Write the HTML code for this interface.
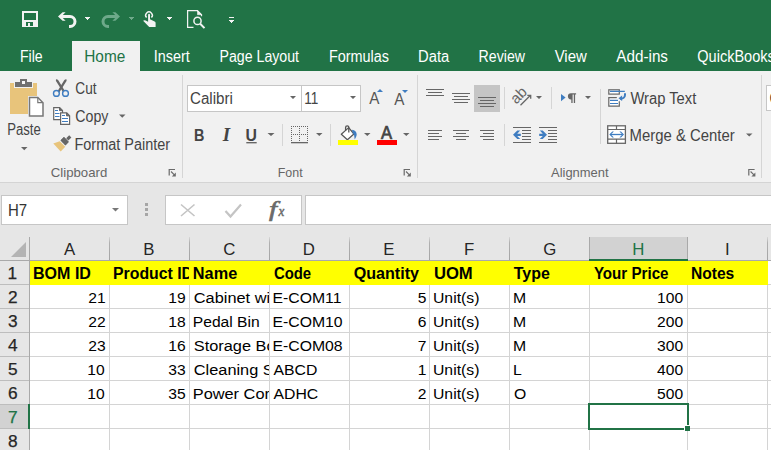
<!DOCTYPE html>
<html><head><meta charset="utf-8"><style>
html,body{margin:0;padding:0;width:771px;height:450px;overflow:hidden;background:#fff}
svg{display:block}
svg{font-family:"Liberation Sans",sans-serif}
text{white-space:pre}
</style></head><body>
<svg width="771" height="450" viewBox="0 0 771 450" shape-rendering="crispEdges">
<defs><clipPath id="c767_771"><rect x="767" y="0" width="4" height="450"/></clipPath><clipPath id="c190_269"><rect x="190" y="0" width="79" height="450"/></clipPath><clipPath id="c110_189"><rect x="110" y="0" width="79" height="450"/></clipPath></defs>
<!-- title + tabs -->
<rect x="0" y="0" width="771" height="71" fill="#217346"/>
<rect x="72" y="41" width="68" height="31" fill="#f1f1f1"/>
<!-- ribbon -->
<rect x="0" y="71" width="771" height="111" fill="#f1f1f1"/>
<rect x="0" y="182" width="771" height="1" fill="#d4d4d4"/>
<rect x="0" y="183" width="771" height="78" fill="#e6e6e6"/>
<!-- QAT icons -->
<g fill="#f3f3f3">
  <path d="M22,11h16v16h-16z M24,12.5v7h12v-7z M26,22v4h2v-3h2v3h3v-4z" fill-rule="evenodd"/>
  <path d="M84,17h6l-3,3z"/>
  <path d="M166.8,17h6.2l-3.1,3.1z"/>
  <path d="M229,17h5v1h-5z M229,20h5.3l-2.65,3.1z"/>
</g>
<g shape-rendering="geometricPrecision">
  <path d="M61,16.5h9a5,5 0 0 1 0,10h-1" fill="none" stroke="#f3f3f3" stroke-width="3"/>
  <path d="M58,16.5l4.6,-4.3h3l-4.3,4.3l4.3,4.3h-3z" fill="#f3f3f3"/>
  <path d="M117,16.5h-9a5,5 0 0 0 0,10h1" fill="none" stroke="#6ea98a" stroke-width="3"/>
  <path d="M120,16.5l-4.6,-4.3h-3l4.3,4.3l-4.3,4.3h3z" fill="#6ea98a"/>
</g>
<path d="M128,17h6l-3,3z" fill="#6ea98a"/>
<!-- touch icon -->
<g shape-rendering="geometricPrecision">
  <path d="M146.6,17.6a3.3,3.3 0 1 1 4.8,0" fill="none" stroke="#f3f3f3" stroke-width="1.4"/>
  <path d="M148.1,14.8a0.95,0.95 0 0 1 1.9,0v4.4l4.6,2.3c0.6,0.3 1,0.8 1,1.4v4.1h-6.4l-6.1,-6.3c0.7,-0.6 1.6,-0.7 2.4,-0.3l2.6,1.4z" fill="#f3f3f3"/>
</g>
<!-- print preview -->
<g fill="none" stroke="#f3f3f3" stroke-width="1.25" shape-rendering="geometricPrecision">
  <path d="M193.5,27.3h-5.9v-16.6h9.9l4,4v1.6"/>
  <path d="M197.5,10.7v4h4z" fill="#f3f3f3" stroke-width="0.6"/>
  <circle cx="197.5" cy="20.9" r="3.6" stroke-width="1.5"/>
  <path d="M200.2,23.8l4.3,4.3" stroke-width="2"/>
</g>
<!-- Paste -->
<rect x="10" y="83" width="27" height="31" rx="1" fill="#e8c47b"/>
<path d="M14,81h19v7h-19z" fill="#f1f1f1"/>
<path d="M15,82h17v5h-17z" fill="#707070"/>
<path d="M20,79h7v4h-7z M22,81v3h3v-3z" fill="#707070" fill-rule="evenodd"/>
<rect x="21.5" y="80.8" width="3.5" height="3.4" fill="#f7f7f7"/>
<path d="M28,96h11l6,6v16h-17z" fill="#f1f1f1"/>
<path d="M29.5,97.5h8.3l5.2,5.2v13.3h-13.5z" fill="#fff" stroke="#777" stroke-width="1.5" shape-rendering="geometricPrecision"/>
<path d="M37.8,97.5v5.2h5.2" fill="none" stroke="#777" stroke-width="1.2" shape-rendering="geometricPrecision"/>
<path d="M21,147h6.5l-3.25,3.2z" fill="#666" shape-rendering="geometricPrecision"/>
<!-- scissors -->
<g shape-rendering="geometricPrecision">
  <path d="M56.2,79.2c0.9,0 1.6,0.4 2.1,1.1l6.9,11.2l-2,1.1l-7.2,-11.6c-0.3,-0.6 -0.2,-1.3 0.2,-1.8z" fill="#666"/>
  <path d="M66.3,79.2c-0.9,0 -1.6,0.4 -2.1,1.1l-6.9,11.2l2,1.1l7.2,-11.6c0.3,-0.6 0.2,-1.3 -0.2,-1.8z" fill="#666"/>
  <circle cx="56.4" cy="93.4" r="2.9" fill="#f1f1f1" stroke="#3f7dc1" stroke-width="1.4"/>
  <circle cx="65.5" cy="93.4" r="2.9" fill="#f1f1f1" stroke="#3f7dc1" stroke-width="1.4"/>
</g>
<!-- copy -->
<g shape-rendering="geometricPrecision">
  <path d="M53.7,107.6h6l2.8,2.8v9.2h-8.8z" fill="#fff" stroke="#666" stroke-width="1.2"/>
  <path d="M60.6,112.9h6.2l2.8,2.8v8.7h-9z" fill="#fff" stroke="#666" stroke-width="1.2"/>
  <path d="M66.5,112.9v3h3 M59.5,107.6v3h3" fill="#666" stroke="#666" stroke-width="1"/>
  <path d="M55,110.5h3M55,113.5h4.5M55,116.5h4.5M62,115.5h3M62,118.5h6M62,121.5h6" stroke="#3f7dc1" stroke-width="1.1"/>
</g>
<path d="M119,114.5h6.5l-3.25,3.2z" fill="#666" shape-rendering="geometricPrecision"/>
<!-- format painter -->
<g shape-rendering="geometricPrecision">
  <path d="M53.3,143.6l6.4,-2.4l5.6,5.6l-4.6,4.6z" fill="#e8c47b"/>
  <path d="M60.7,140.3l3.3,-3.3l4.6,4.6l-3.3,3.3z" fill="#666" transform="translate(0,0)"/>
  <path d="M60.5,140.5l3.4,-3.4l3.2,3.2l-3.4,3.4z" fill="#666"/>
  <path d="M63.9,143.9l3.4,-3.4l1.6,1.6l-3.4,3.4z" fill="#666"/>
  <path d="M66.2,138.2l3,-3l2.2,2.2l-3,3z" fill="#666"/>
</g>
<!-- dialog launchers -->
<g shape-rendering="geometricPrecision">
<path d="M169.2,175.5v-6h5.8" fill="none" stroke="#6a6a6a" stroke-width="1.2"/>
<path d="M171.0,171.5l3.6,3.6" fill="none" stroke="#6a6a6a" stroke-width="1.1"/>
<path d="M175.8,172.4v4h-4z" fill="#6a6a6a"/>
<path d="M404.2,175.5v-6h5.8" fill="none" stroke="#6a6a6a" stroke-width="1.2"/>
<path d="M406.0,171.5l3.6,3.6" fill="none" stroke="#6a6a6a" stroke-width="1.1"/>
<path d="M410.8,172.4v4h-4z" fill="#6a6a6a"/>
<path d="M748.8,175.5v-6h5.8" fill="none" stroke="#6a6a6a" stroke-width="1.2"/>
<path d="M750.6,171.5l3.6,3.6" fill="none" stroke="#6a6a6a" stroke-width="1.1"/>
<path d="M755.4,172.4v4h-4z" fill="#6a6a6a"/>
</g>
<!-- group separators -->
<rect x="182" y="75" width="1" height="103" fill="#d5d5d5"/>
<rect x="417" y="75" width="1" height="103" fill="#d5d5d5"/>
<rect x="761" y="75" width="1" height="103" fill="#d5d5d5"/>
<!-- font boxes -->
<rect x="187.5" y="85.5" width="173" height="26" fill="#fff" stroke="#c6c6c6"/>
<rect x="301" y="85" width="1" height="27" fill="#c6c6c6"/>
<path d="M290,96h6l-3,3z M350,96h6l-3,3z" fill="#666" shape-rendering="geometricPrecision"/>
<rect x="766.5" y="85.5" width="10" height="25" fill="#fff" stroke="#c6c6c6"/>
<!-- grow/shrink -->
<g shape-rendering="geometricPrecision">
  <path d="M377,92h6l-3,-3z" fill="#3f7dc1"/>
  <path d="M402,90h6l-3,3z" fill="#3f7dc1"/>
</g>
<!-- B I U -->
<g shape-rendering="geometricPrecision">
  <rect x="246.3" y="142.2" width="10.4" height="1.1" fill="#444"/>
  <path d="M267.5,133h7l-3.5,3z M316,133h6.5l-3.25,3z M364,133h6.5l-3.25,3z M403,133h6.5l-3.25,3z" fill="#666"/>
</g>
<rect x="282" y="124" width="1" height="22" fill="#d5d5d5"/>
<rect x="330" y="124" width="1" height="22" fill="#d5d5d5"/>
<!-- borders icon -->
<path d="M291,126h1v1h-1z M291,134h1v1h-1z M293,126h1v1h-1z M293,134h1v1h-1z M295,126h1v1h-1z M295,134h1v1h-1z M297,126h1v1h-1z M297,134h1v1h-1z M299,126h1v1h-1z M299,134h1v1h-1z M301,126h1v1h-1z M301,134h1v1h-1z M303,126h1v1h-1z M303,134h1v1h-1z M305,126h1v1h-1z M305,134h1v1h-1z M307,126h1v1h-1z M307,134h1v1h-1z M291,128h1v1h-1z M291,130h1v1h-1z M291,132h1v1h-1z M291,136h1v1h-1z M291,138h1v1h-1z M291,140h1v1h-1z M299,128h1v1h-1z M299,130h1v1h-1z M299,132h1v1h-1z M299,136h1v1h-1z M299,138h1v1h-1z M299,140h1v1h-1z M307,128h1v1h-1z M307,130h1v1h-1z M307,132h1v1h-1z M307,136h1v1h-1z M307,138h1v1h-1z M307,140h1v1h-1z" fill="#666"/>
<rect x="291" y="142" width="17" height="1.3" fill="#666" shape-rendering="geometricPrecision"/>
<!-- fill color -->
<g shape-rendering="geometricPrecision">
  <path d="M341.3,134.2l7.4,-6.6l5.2,6.4l-6.5,5.8z" fill="#fff" stroke="#555" stroke-width="1.2" stroke-linejoin="round"/>
  <path d="M345.6,130.8v-3.4a1.6,1.6 0 0 1 3.2,0v5" fill="none" stroke="#555" stroke-width="1.3"/>
  <path d="M352,129.8c2.8,0.4 4.8,2.2 4.7,4.8c-0.1,1.7 -1,3.4 -2,4.9l-0.6,-4.6l-1.5,-2.2z" fill="#3f7dc1"/>
  <rect x="338" y="140" width="20" height="5" fill="#ffff00"/>
  <rect x="377" y="140" width="20" height="5" fill="#ff0000"/>
</g>
<!-- alignment icons -->
<rect x="474" y="85" width="26" height="27" fill="#c5c5c5"/>
<g fill="#666">
  <path d="M426,89h18v1.2h-18z M428,92h14v1.2h-14z M426,95h18v1.2h-18z"/>
  <path d="M452,93h18v1.2h-18z M454,96h14v1.2h-14z M452,99h18v1.2h-18z M454,102h14v1.2h-14z"/>
  <path d="M478,97h18v1.2h-18z M480,100h14v1.2h-14z M478,103h18v1.2h-18z M480,106h14v1.2h-14z"/>
  <path d="M428,130h14v1.2h-14z M428,133h11v1.2h-11z M428,136h14v1.2h-14z M428,139h11v1.2h-11z"/>
  <path d="M453,130h16v1.2h-16z M456,133h10v1.2h-10z M453,136h16v1.2h-16z M456,139h10v1.2h-10z"/>
  <path d="M480,130h14v1.2h-14z M483,133h11v1.2h-11z M480,136h14v1.2h-14z M483,139h11v1.2h-11z"/>
  <path d="M513,127h18v1.2h-18z M522,130h9v1.2h-9z M522,133h9v1.2h-9z M522,136h9v1.2h-9z M522,139h9v1.2h-9z M513,142h18v1.2h-18z"/>
  <path d="M539,127h18v1.2h-18z M548,130h9v1.2h-9z M548,133h9v1.2h-9z M548,136h9v1.2h-9z M548,139h9v1.2h-9z M539,142h18v1.2h-18z"/>
  <path d="M536,96h6l-3,3z M585,96h6l-3,3z M746,133.5h6.5l-3.25,3z" shape-rendering="geometricPrecision"/>
</g>
<g shape-rendering="geometricPrecision">
  <path d="M513,134.8l4.3,-4.2h2.9l-3,3.1h3.6v2.3h-3.6l3,3.1h-2.9z" fill="#3f7dc1"/>
  <path d="M547,134.8l-4.3,-4.2h-2.9l3,3.1h-3.6v2.3h3.6l-3,3.1h2.9z" fill="#3f7dc1"/>
  <path d="M561,94v7.2l4.6,-3.6z" fill="#3f7dc1"/>
  <path d="M571.5,93.2h4.6v1.2h-1v8.6h-1.3v-8.6h-1.2v8.6h-1.3v-3.6h-0.3a3.1,3.1 0 0 1 0,-6.2z" fill="#666"/>
  <text x="0" y="0" font-size="15" fill="#666" text-anchor="middle" transform="translate(518.6,95.4) rotate(-45) translate(0,4.9)">ab</text>
  <path d="M520.5,105.3l10,-10 M527.3,95.3h3.4v3.4" fill="none" stroke="#666" stroke-width="1.3"/>
</g>
<rect x="504" y="87" width="1" height="22" fill="#d5d5d5"/>
<rect x="504" y="124" width="1" height="22" fill="#d5d5d5"/>
<rect x="551" y="87" width="1" height="22" fill="#d5d5d5"/>
<rect x="600" y="89" width="1" height="55" fill="#d5d5d5"/>
<!-- wrap text icon -->
<g shape-rendering="geometricPrecision">
  <rect x="608.8" y="89.8" width="10.5" height="4.3" fill="#fff" stroke="#666" stroke-width="1.2"/>
  <path d="M616.8,97.7h-8v8.5h10.5v-5" fill="#fff" stroke="#666" stroke-width="1.2"/>
  <path d="M610,91.4h14.8 M610,100.4h8 M610,103.5h8" stroke="#3f7dc1" stroke-width="1.2"/>
  <path d="M625,93.2v1.5a4,4 0 0 1 -4,4h-1" fill="none" stroke="#3f7dc1" stroke-width="2"/>
  <path d="M618.5,98.3l3.6,-2.9v5.6z" fill="#3f7dc1"/>
</g>
<!-- merge icon -->
<g shape-rendering="geometricPrecision">
  <rect x="607.7" y="125.8" width="17.7" height="17.5" fill="#fff" stroke="#666" stroke-width="1.3"/>
  <path d="M608,129.5h17 M608,139.2h17 M616.5,126v3.5 M616.5,139.2v4" stroke="#666" stroke-width="1.2"/>
  <path d="M611,134.5h11.5" stroke="#3f7dc1" stroke-width="1.3"/>
  <path d="M609.3,134.5l3,-3h1.6l-3,3l3,3h-1.6z M624,134.5l-3,-3h-1.6l3,3l-3,3h1.6z" fill="#3f7dc1"/>
</g>
<!-- formula bar -->
<rect x="1.5" y="195.5" width="126" height="29" fill="#fff" stroke="#c6c6c6"/>
<path d="M112,208h7l-3.5,3.5z" fill="#777" shape-rendering="geometricPrecision"/>
<rect x="145" y="203" width="3" height="3" fill="#a6a6a6"/>
<rect x="145" y="208" width="3" height="3" fill="#a6a6a6"/>
<rect x="145" y="213" width="3" height="3" fill="#a6a6a6"/>
<rect x="165.5" y="195.5" width="136" height="29" fill="#fff" stroke="#c6c6c6"/>
<rect x="305.5" y="195.5" width="480" height="29" fill="#fff" stroke="#c6c6c6"/>
<g shape-rendering="geometricPrecision">
  <path d="M181,204.5l13.5,11.5M194.5,204.5l-13.5,11.5" stroke="#c4c4c4" stroke-width="1.6"/>
  <path d="M225.5,211l5,5.5l10.5,-12" fill="none" stroke="#c4c4c4" stroke-width="2.2"/>
</g>
<!-- sheet -->
<rect x="0" y="237" width="771" height="23" fill="#e6e6e6"/>
<rect x="0" y="260" width="771" height="1" fill="#a9a9a9"/>
<rect x="0" y="261" width="29" height="189" fill="#e6e6e6"/>
<rect x="29" y="237" width="1" height="213" fill="#a9a9a9"/>
<path d="M11,257l15,-15v15z" fill="#b4b4b4" shape-rendering="geometricPrecision"/>
<rect x="30" y="261" width="741" height="189" fill="#fff"/>
<g fill="#bdbdbd">
  <rect x="0" y="284" width="29" height="1"/><rect x="0" y="308" width="29" height="1"/><rect x="0" y="332" width="29" height="1"/>
  <rect x="0" y="356" width="29" height="1"/><rect x="0" y="380" width="29" height="1"/><rect x="0" y="404" width="29" height="1"/><rect x="0" y="428" width="29" height="1"/>
</g>
<linearGradient id="hg" x1="0" y1="0" x2="0" y2="1"><stop offset="0" stop-color="#d8d8d8"/><stop offset="0.25" stop-color="#b0b0b0"/><stop offset="1" stop-color="#a4a4a4"/></linearGradient>
<g fill="url(#hg)">
  <rect x="109" y="237" width="1" height="23"/><rect x="189" y="237" width="1" height="23"/><rect x="269" y="237" width="1" height="23"/>
  <rect x="349" y="237" width="1" height="23"/><rect x="429" y="237" width="1" height="23"/><rect x="509" y="237" width="1" height="23"/>
  <rect x="767" y="237" width="1" height="23"/>
</g>
<rect x="589" y="237" width="99" height="23" fill="#d2d2d2"/>
<rect x="589" y="237" width="1" height="23" fill="#a9a9a9"/>
<rect x="687" y="237" width="1" height="23" fill="#a9a9a9"/>
<rect x="589" y="259" width="99" height="2" fill="#217346"/>
<rect x="0" y="405" width="28" height="23" fill="#d2d2d2"/>
<rect x="28" y="404" width="2" height="25" fill="#217346"/>
<g fill="#d4d4d4">
  <rect x="30" y="308" width="741" height="1"/><rect x="30" y="332" width="741" height="1"/><rect x="30" y="356" width="741" height="1"/>
  <rect x="30" y="380" width="741" height="1"/><rect x="30" y="404" width="741" height="1"/><rect x="30" y="428" width="741" height="1"/>
  <rect x="768" y="284" width="3" height="1"/>
  <rect x="109" y="285" width="1" height="165"/><rect x="189" y="285" width="1" height="165"/><rect x="269" y="285" width="1" height="165"/>
  <rect x="349" y="285" width="1" height="165"/><rect x="429" y="285" width="1" height="165"/><rect x="509" y="285" width="1" height="165"/>
  <rect x="589" y="285" width="1" height="165"/><rect x="687" y="285" width="1" height="165"/><rect x="767" y="261" width="1" height="189"/>
</g>
<rect x="30" y="261" width="738" height="24" fill="#ffff00"/>
<!-- selection -->
<path d="M588,403h101v27h-101z M590,405v23h97v-23z" fill="#217346" fill-rule="evenodd"/>
<rect x="684" y="425" width="6" height="6" fill="#fff"/>
<rect x="685" y="426" width="5" height="5" fill="#217346"/>

<g shape-rendering="geometricPrecision">
<text x="20.02" y="62.00" font-size="16" fill="#fff" textLength="22.69" lengthAdjust="spacingAndGlyphs">File</text>
<text x="84.24" y="62.00" font-size="16" fill="#217346" textLength="41.06" lengthAdjust="spacingAndGlyphs">Home</text>
<text x="153.80" y="62.00" font-size="16" fill="#fff" textLength="36.00" lengthAdjust="spacingAndGlyphs">Insert</text>
<text x="219.52" y="62.00" font-size="16" fill="#fff" textLength="79.49" lengthAdjust="spacingAndGlyphs">Page Layout</text>
<text x="328.90" y="62.00" font-size="16" fill="#fff" textLength="60.10" lengthAdjust="spacingAndGlyphs">Formulas</text>
<text x="418.08" y="62.00" font-size="16" fill="#fff" textLength="31.23" lengthAdjust="spacingAndGlyphs">Data</text>
<text x="478.62" y="62.00" font-size="16" fill="#fff" textLength="46.39" lengthAdjust="spacingAndGlyphs">Review</text>
<text x="554.70" y="62.00" font-size="16" fill="#fff" textLength="32.08" lengthAdjust="spacingAndGlyphs">View</text>
<text x="616.30" y="62.00" font-size="16" fill="#fff" textLength="51.70" lengthAdjust="spacingAndGlyphs">Add-ins</text>
<text x="697.30" y="62.00" font-size="16" fill="#fff" textLength="77.47" lengthAdjust="spacingAndGlyphs">QuickBooks</text>
<text x="7.18" y="135.00" font-size="16" fill="#444" textLength="33.54" lengthAdjust="spacingAndGlyphs">Paste</text>
<text x="75.30" y="94.00" font-size="16" fill="#444" textLength="21.23" lengthAdjust="spacingAndGlyphs">Cut</text>
<text x="75.30" y="122.00" font-size="16" fill="#444" textLength="33.10" lengthAdjust="spacingAndGlyphs">Copy</text>
<text x="74.50" y="150.00" font-size="16" fill="#444" textLength="95.60" lengthAdjust="spacingAndGlyphs">Format Painter</text>
<text x="50.80" y="177.00" font-size="13" fill="#666" textLength="56.43" lengthAdjust="spacingAndGlyphs">Clipboard</text>
<text x="190.00" y="104.00" font-size="16" fill="#444" textLength="42.93" lengthAdjust="spacingAndGlyphs">Calibri</text>
<text x="304.35" y="104.00" font-size="16" fill="#444" textLength="14.06" lengthAdjust="spacingAndGlyphs">11</text>
<text x="277.74" y="177.00" font-size="13" fill="#666" textLength="24.89" lengthAdjust="spacingAndGlyphs">Font</text>
<text x="630.40" y="104.00" font-size="16" fill="#444" textLength="65.89" lengthAdjust="spacingAndGlyphs">Wrap Text</text>
<text x="629.57" y="141.00" font-size="16" fill="#444" textLength="105.11" lengthAdjust="spacingAndGlyphs">Merge &amp; Center</text>
<text x="769.60" y="104.00" font-size="16" fill="#333" clip-path="url(#c767_771)" textLength="51.66" lengthAdjust="spacingAndGlyphs">General</text>
<text x="551.00" y="177.00" font-size="13" fill="#666" textLength="57.61" lengthAdjust="spacingAndGlyphs">Alignment</text>
<text x="194.07" y="141.00" font-size="17.4" fill="#444" font-weight="bold" textLength="10.39" lengthAdjust="spacingAndGlyphs">B</text>
<text x="222.83" y="141.00" font-size="18.3" fill="#444" font-weight="bold" font-style="italic" font-family="Liberation Serif" textLength="7.35" lengthAdjust="spacingAndGlyphs">I</text>
<text x="245.59" y="141.00" font-size="17.4" fill="#444" font-weight="bold" textLength="11.42" lengthAdjust="spacingAndGlyphs">U</text>
<text x="369.20" y="104.00" font-size="16.3" fill="#555" textLength="10.17" lengthAdjust="spacingAndGlyphs">A</text>
<text x="394.20" y="105.00" font-size="16.3" fill="#555" textLength="10.17" lengthAdjust="spacingAndGlyphs">A</text>
<text x="381.00" y="138.70" font-size="18.3" fill="#444" stroke="#444" stroke-width="0.7" textLength="11.07" lengthAdjust="spacingAndGlyphs">A</text>
<text x="8.06" y="216.00" font-size="16" fill="#333" textLength="19.14" lengthAdjust="spacingAndGlyphs">H7</text>
<text x="269.00" y="215.60" font-size="20" fill="#6a6a6a" font-style="italic" font-family="Liberation Serif" stroke="#6a6a6a" stroke-width="0.6" textLength="7.99" lengthAdjust="spacingAndGlyphs">f</text>
<text x="278.38" y="215.60" font-size="15" fill="#6a6a6a" font-style="italic" font-family="Liberation Serif" stroke="#6a6a6a" stroke-width="0.5" textLength="5.83" lengthAdjust="spacingAndGlyphs">x</text>
<text x="63.90" y="255.00" font-size="16.5" fill="#262626" textLength="11.21" lengthAdjust="spacingAndGlyphs">A</text>
<text x="143.39" y="255.00" font-size="16.5" fill="#262626" textLength="11.21" lengthAdjust="spacingAndGlyphs">B</text>
<text x="223.39" y="255.00" font-size="16.5" fill="#262626" textLength="12.13" lengthAdjust="spacingAndGlyphs">C</text>
<text x="302.88" y="255.00" font-size="16.5" fill="#262626" textLength="12.13" lengthAdjust="spacingAndGlyphs">D</text>
<text x="383.39" y="255.00" font-size="16.5" fill="#262626" textLength="11.21" lengthAdjust="spacingAndGlyphs">E</text>
<text x="463.90" y="255.00" font-size="16.5" fill="#262626" textLength="10.26" lengthAdjust="spacingAndGlyphs">F</text>
<text x="543.39" y="255.00" font-size="16.5" fill="#262626" textLength="13.07" lengthAdjust="spacingAndGlyphs">G</text>
<text x="632.39" y="255.00" font-size="16.5" fill="#217346" textLength="12.13" lengthAdjust="spacingAndGlyphs">H</text>
<text x="724.95" y="255.00" font-size="16.5" fill="#262626" textLength="4.67" lengthAdjust="spacingAndGlyphs">I</text>
<text x="7.51" y="279.00" font-size="17" fill="#262626" stroke="#262626" stroke-width="0.25" textLength="9.63" lengthAdjust="spacingAndGlyphs">1</text>
<text x="8.02" y="303.00" font-size="17" fill="#262626" stroke="#262626" stroke-width="0.25" textLength="9.63" lengthAdjust="spacingAndGlyphs">2</text>
<text x="8.02" y="327.00" font-size="17" fill="#262626" stroke="#262626" stroke-width="0.25" textLength="9.63" lengthAdjust="spacingAndGlyphs">3</text>
<text x="8.02" y="351.00" font-size="17" fill="#262626" stroke="#262626" stroke-width="0.25" textLength="9.63" lengthAdjust="spacingAndGlyphs">4</text>
<text x="8.02" y="375.00" font-size="17" fill="#262626" stroke="#262626" stroke-width="0.25" textLength="9.63" lengthAdjust="spacingAndGlyphs">5</text>
<text x="8.02" y="399.00" font-size="17" fill="#262626" stroke="#262626" stroke-width="0.25" textLength="9.63" lengthAdjust="spacingAndGlyphs">6</text>
<text x="8.02" y="423.00" font-size="17" fill="#217346" stroke="#217346" stroke-width="0.25" textLength="9.63" lengthAdjust="spacingAndGlyphs">7</text>
<text x="8.02" y="447.00" font-size="17" fill="#262626" stroke="#262626" stroke-width="0.25" textLength="9.63" lengthAdjust="spacingAndGlyphs">8</text>
<text x="33.00" y="279.00" font-size="16" fill="#000" font-weight="bold" textLength="57.96" lengthAdjust="spacingAndGlyphs">BOM ID</text>
<text x="113.01" y="279.00" font-size="16" fill="#000" font-weight="bold" clip-path="url(#c110_189)" textLength="80.06" lengthAdjust="spacingAndGlyphs">Product ID</text>
<text x="192.88" y="279.00" font-size="16" fill="#000" font-weight="bold" textLength="44.31" lengthAdjust="spacingAndGlyphs">Name</text>
<text x="273.90" y="279.00" font-size="16" fill="#000" font-weight="bold" textLength="37.21" lengthAdjust="spacingAndGlyphs">Code</text>
<text x="353.70" y="279.00" font-size="16" fill="#000" font-weight="bold" textLength="65.30" lengthAdjust="spacingAndGlyphs">Quantity</text>
<text x="433.90" y="279.00" font-size="16" fill="#000" font-weight="bold" textLength="38.84" lengthAdjust="spacingAndGlyphs">UOM</text>
<text x="513.70" y="279.00" font-size="16" fill="#000" font-weight="bold" textLength="36.10" lengthAdjust="spacingAndGlyphs">Type</text>
<text x="593.90" y="279.00" font-size="16" fill="#000" font-weight="bold" textLength="74.60" lengthAdjust="spacingAndGlyphs">Your Price</text>
<text x="690.92" y="279.00" font-size="16" fill="#000" font-weight="bold" textLength="43.38" lengthAdjust="spacingAndGlyphs">Notes</text>
<text x="88.34" y="303.00" font-size="15.5" fill="#000" textLength="17.39" lengthAdjust="spacingAndGlyphs">21</text>
<text x="168.34" y="303.00" font-size="15.5" fill="#000" textLength="17.39" lengthAdjust="spacingAndGlyphs">19</text>
<text x="193.80" y="303.00" font-size="15.5" fill="#000" clip-path="url(#c190_269)" textLength="129.83" lengthAdjust="spacingAndGlyphs">Cabinet with Door</text>
<text x="272.48" y="303.00" font-size="15.5" fill="#000" textLength="68.98" lengthAdjust="spacingAndGlyphs">E-COM11</text>
<text x="417.83" y="303.00" font-size="15.5" fill="#000" textLength="8.69" lengthAdjust="spacingAndGlyphs">5</text>
<text x="432.98" y="303.00" font-size="15.5" fill="#000" textLength="46.47" lengthAdjust="spacingAndGlyphs">Unit(s)</text>
<text x="512.98" y="303.00" font-size="15.5" fill="#000" textLength="13.15" lengthAdjust="spacingAndGlyphs">M</text>
<text x="657.04" y="303.00" font-size="15.5" fill="#000" textLength="26.08" lengthAdjust="spacingAndGlyphs">100</text>
<text x="88.34" y="327.00" font-size="15.5" fill="#000" textLength="17.39" lengthAdjust="spacingAndGlyphs">22</text>
<text x="168.34" y="327.00" font-size="15.5" fill="#000" textLength="17.39" lengthAdjust="spacingAndGlyphs">18</text>
<text x="192.79" y="327.00" font-size="15.5" fill="#000" clip-path="url(#c190_269)" textLength="66.93" lengthAdjust="spacingAndGlyphs">Pedal Bin</text>
<text x="272.48" y="327.00" font-size="15.5" fill="#000" textLength="70.15" lengthAdjust="spacingAndGlyphs">E-COM10</text>
<text x="417.83" y="327.00" font-size="15.5" fill="#000" textLength="8.69" lengthAdjust="spacingAndGlyphs">6</text>
<text x="432.98" y="327.00" font-size="15.5" fill="#000" textLength="46.47" lengthAdjust="spacingAndGlyphs">Unit(s)</text>
<text x="512.98" y="327.00" font-size="15.5" fill="#000" textLength="13.15" lengthAdjust="spacingAndGlyphs">M</text>
<text x="657.04" y="327.00" font-size="15.5" fill="#000" textLength="26.08" lengthAdjust="spacingAndGlyphs">200</text>
<text x="88.34" y="351.00" font-size="15.5" fill="#000" textLength="17.39" lengthAdjust="spacingAndGlyphs">23</text>
<text x="168.34" y="351.00" font-size="15.5" fill="#000" textLength="17.39" lengthAdjust="spacingAndGlyphs">16</text>
<text x="193.80" y="351.00" font-size="15.5" fill="#000" clip-path="url(#c190_269)" textLength="89.89" lengthAdjust="spacingAndGlyphs">Storage Box</text>
<text x="272.48" y="351.00" font-size="15.5" fill="#000" textLength="70.15" lengthAdjust="spacingAndGlyphs">E-COM08</text>
<text x="417.83" y="351.00" font-size="15.5" fill="#000" textLength="8.69" lengthAdjust="spacingAndGlyphs">7</text>
<text x="432.98" y="351.00" font-size="15.5" fill="#000" textLength="46.47" lengthAdjust="spacingAndGlyphs">Unit(s)</text>
<text x="512.98" y="351.00" font-size="15.5" fill="#000" textLength="13.15" lengthAdjust="spacingAndGlyphs">M</text>
<text x="657.04" y="351.00" font-size="15.5" fill="#000" textLength="26.08" lengthAdjust="spacingAndGlyphs">300</text>
<text x="87.33" y="375.00" font-size="15.5" fill="#000" textLength="17.39" lengthAdjust="spacingAndGlyphs">10</text>
<text x="168.34" y="375.00" font-size="15.5" fill="#000" textLength="17.39" lengthAdjust="spacingAndGlyphs">33</text>
<text x="193.80" y="375.00" font-size="15.5" fill="#000" clip-path="url(#c190_269)" textLength="131.67" lengthAdjust="spacingAndGlyphs">Cleaning Supplies</text>
<text x="273.50" y="375.00" font-size="15.5" fill="#000" textLength="43.85" lengthAdjust="spacingAndGlyphs">ABCD</text>
<text x="417.83" y="375.00" font-size="15.5" fill="#000" textLength="8.69" lengthAdjust="spacingAndGlyphs">1</text>
<text x="432.98" y="375.00" font-size="15.5" fill="#000" textLength="46.47" lengthAdjust="spacingAndGlyphs">Unit(s)</text>
<text x="512.98" y="375.00" font-size="15.5" fill="#000" textLength="8.78" lengthAdjust="spacingAndGlyphs">L</text>
<text x="657.04" y="375.00" font-size="15.5" fill="#000" textLength="26.08" lengthAdjust="spacingAndGlyphs">400</text>
<text x="87.33" y="399.00" font-size="15.5" fill="#000" textLength="17.39" lengthAdjust="spacingAndGlyphs">10</text>
<text x="168.34" y="399.00" font-size="15.5" fill="#000" textLength="17.39" lengthAdjust="spacingAndGlyphs">35</text>
<text x="192.75" y="399.00" font-size="15.5" fill="#000" clip-path="url(#c190_269)" textLength="86.24" lengthAdjust="spacingAndGlyphs">Power Cord</text>
<text x="273.50" y="399.00" font-size="15.5" fill="#000" textLength="44.72" lengthAdjust="spacingAndGlyphs">ADHC</text>
<text x="417.83" y="399.00" font-size="15.5" fill="#000" textLength="8.69" lengthAdjust="spacingAndGlyphs">2</text>
<text x="432.98" y="399.00" font-size="15.5" fill="#000" textLength="46.47" lengthAdjust="spacingAndGlyphs">Unit(s)</text>
<text x="514.00" y="399.00" font-size="15.5" fill="#000" textLength="12.28" lengthAdjust="spacingAndGlyphs">O</text>
<text x="657.04" y="399.00" font-size="15.5" fill="#000" textLength="26.08" lengthAdjust="spacingAndGlyphs">500</text>
</g>
</svg>
</body></html>
